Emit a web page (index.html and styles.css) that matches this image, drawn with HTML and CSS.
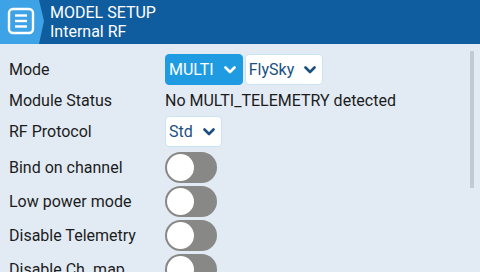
FILE: index.html
```html
<!DOCTYPE html>
<html lang="en">

<head>
    <meta charset="UTF-8">
    <title>Model Setup</title>
    <link rel="stylesheet" href="styles.css">
</head>

<body>
    <div class="screen">
        <div class="header">
            <div class="menu-icon">
                <svg width="46" height="44" viewBox="0 0 46 44">
                    <polygon points="0,0 39,0 44,21 39,44 0,44" fill="#3ea2e6" />
                    <rect x="9" y="9" width="24" height="24" rx="4" fill="none" stroke="#fff" stroke-width="2.4" />
                    <line x1="15" y1="15.5" x2="27" y2="15.5" stroke="#fff" stroke-width="2.4" />
                    <line x1="15" y1="21" x2="27" y2="21" stroke="#fff" stroke-width="2.4" />
                    <line x1="15" y1="26.5" x2="27" y2="26.5" stroke="#fff" stroke-width="2.4" />
                </svg>
            </div>
            <div class="titles">
                <div class="title">MODEL SETUP</div>
                <div class="subtitle">Internal RF</div>
            </div>
        </div>

        <div class="content">
            <div class="row short">
                <span class="label">Mode</span>
                <div class="controls">
                    <div class="choice active">MULTI<svg class="chev" viewBox="0 0 12 8"><polyline points="1.5,1.5 6,6 10.5,1.5" /></svg></div>
                    <div class="choice">FlySky<svg class="chev" viewBox="0 0 12 8"><polyline points="1.5,1.5 6,6 10.5,1.5" /></svg></div>
                </div>
            </div>
            <div class="row short">
                <span class="label">Module Status</span>
                <span class="value">No MULTI_TELEMETRY detected</span>
            </div>
            <div class="row short">
                <span class="label">RF Protocol</span>
                <div class="controls">
                    <div class="choice">Std<svg class="chev" viewBox="0 0 12 8"><polyline points="1.5,1.5 6,6 10.5,1.5" /></svg></div>
                </div>
            </div>
            <div class="row first-toggle">
                <span class="label">Bind on channel</span>
                <div class="toggle"><div class="knob"></div></div>
            </div>
            <div class="row">
                <span class="label">Low power mode</span>
                <div class="toggle"><div class="knob"></div></div>
            </div>
            <div class="row">
                <span class="label">Disable Telemetry</span>
                <div class="toggle"><div class="knob"></div></div>
            </div>
            <div class="row">
                <span class="label">Disable Ch. map</span>
                <div class="toggle"><div class="knob"></div></div>
            </div>

            <div class="scrollbar"></div>
        </div>
    </div>
</body>

</html>
```

FILE: styles.css
```css
body {
    margin: 0;
    font-family: 'Roboto', 'Noto Sans', sans-serif;
    background-color: #e2ebf4;
    color: #1c1c1c;
}

.screen {
    width: 480px;
    height: 272px;
    overflow: hidden;
    display: flex;
    flex-direction: column;
}

.header {
    height: 44px;
    flex: none;
    background-color: #0f5c9e;
    display: flex;
    align-items: stretch;
}

.menu-icon svg {
    display: block;
}

.titles {
    padding-left: 4px;
    padding-top: 3px;
    color: #fff;
    font-size: 16px;
    line-height: 19px;
}

.content {
    flex: 1;
    position: relative;
    padding: 10px 0 0 9px;
}

.row {
    height: 34px;
    flex: none;
    display: flex;
    align-items: center;
}

.row.short {
    height: 31px;
}

.row.first-toggle {
    margin-top: 3px;
}

.label {
    width: 156px;
    font-size: 16px;
}

.value {
    font-size: 16px;
}

.controls {
    display: flex;
    gap: 2px;
}

.choice {
    height: 31px;
    box-sizing: border-box;
    display: flex;
    align-items: center;
    padding: 0 6px 0 3px;
    background-color: #fff;
    border: 1px solid #c9e3f3;
    border-radius: 4px;
    color: #1a4f82;
    font-size: 16px;
}

.choice.active {
    background-color: #1f9be1;
    border-color: #1f9be1;
    color: #fff;
}

.chev {
    width: 12px;
    height: 8px;
    margin-left: 10px;
    fill: none;
    stroke: currentColor;
    stroke-width: 2.6;
    stroke-linecap: round;
    stroke-linejoin: round;
}

.choice:not(.active) .chev {
    stroke: #1a4f82;
}

.toggle {
    width: 52px;
    height: 31px;
    box-sizing: border-box;
    border-radius: 16px;
    background-color: #888886;
    padding: 2px;
}

.knob {
    width: 27px;
    height: 27px;
    border-radius: 50%;
    background-color: #fff;
}

.scrollbar {
    position: absolute;
    left: 470px;
    top: 7px;
    width: 4px;
    height: 137px;
    background-color: #c3cad1;
}
```
